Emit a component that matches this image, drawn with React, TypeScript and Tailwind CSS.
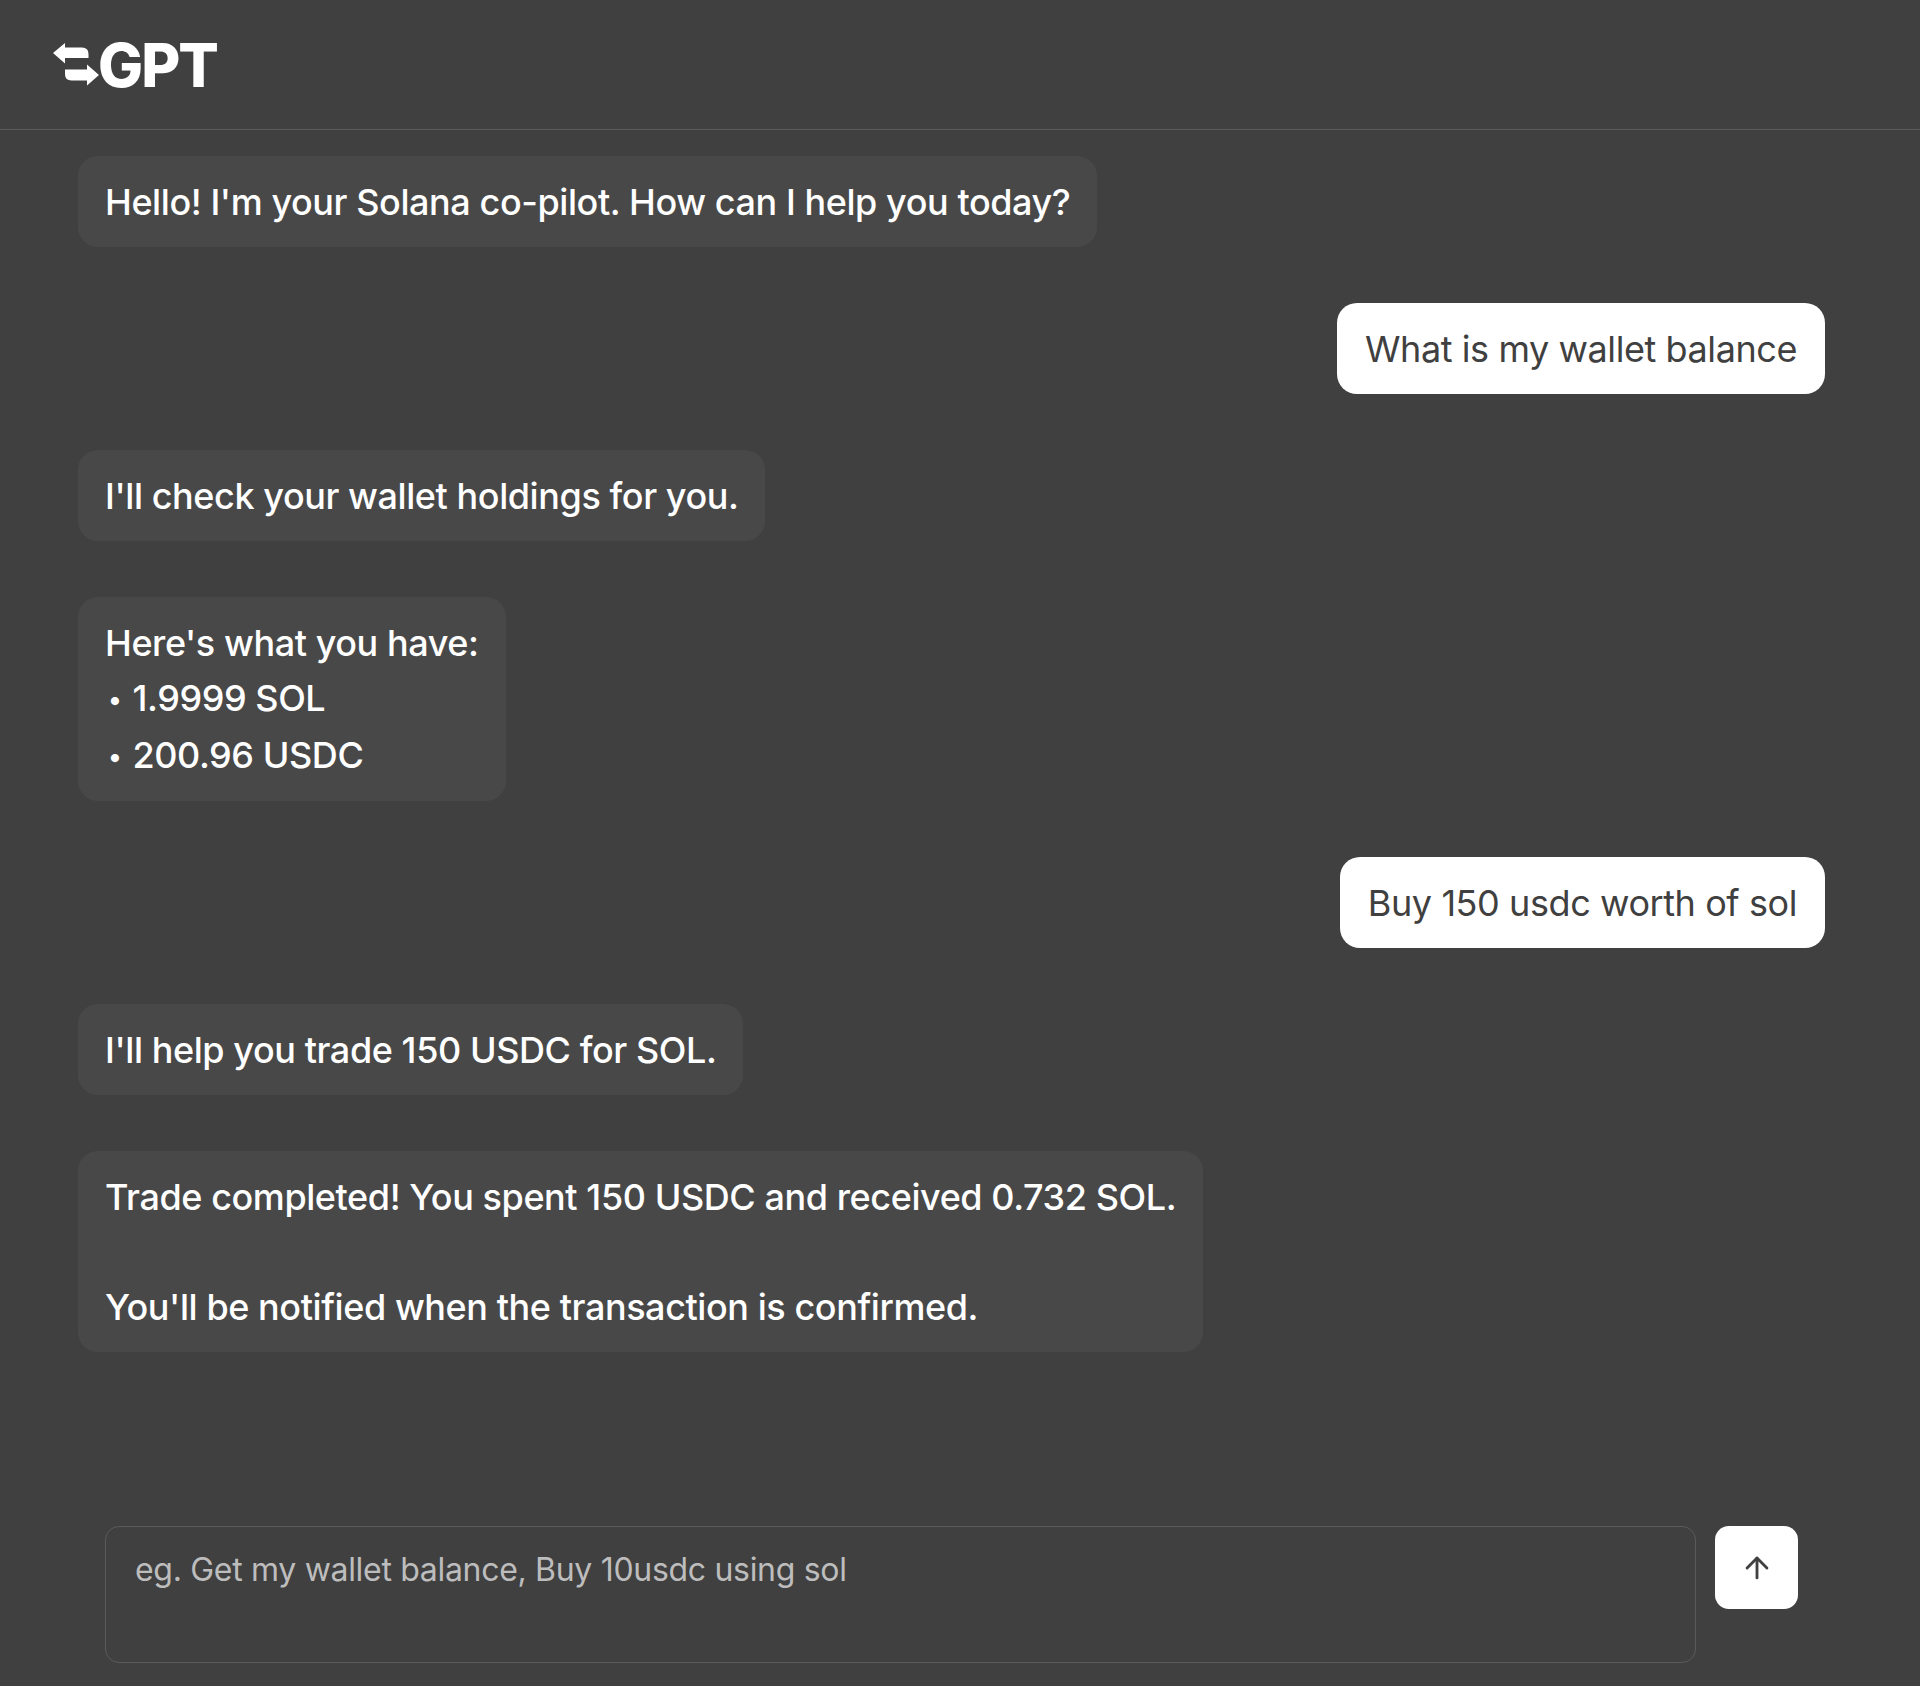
import React from 'react';
import { ArrowUp } from 'lucide-react';

const Logo = () => (
  <div className="flex items-center">
    <svg width="46" height="44" viewBox="0 0 46 44" fill="white" className="mr-[-1px]">
      <path d="M0 10 L12 0 V4.5 H29 Q35.5 4.5 35.5 11 V15 H12 V20.5 Z" />
      <path d="M46 32 L34 21.5 V26.5 H12 V31 Q12 37.5 18.5 37.5 H34 V42.5 Z" />
    </svg>
    <span className="text-[60px] leading-none font-extrabold tracking-[-2px] text-white">GPT</span>
  </div>
);

const Bot = ({ children }: { children: React.ReactNode }) => (
  <div className="self-start rounded-[20px] bg-[#484848] px-[27px] pb-[17px] pt-[19px] font-[450] text-white whitespace-pre-line">
    {children}
  </div>
);

const User = ({ children }: { children: React.ReactNode }) => (
  <div className="self-end rounded-[20px] bg-white px-[28px] pb-[17px] pt-[19px] text-[#404040]">
    {children}
  </div>
);

const Bullet = () => <span className="mr-[11px] ml-[3px] align-[2px] text-[26px]">•</span>;

export default function App() {
  return (
    <div className="flex h-[1686px] flex-col bg-[#404040] font-['Inter',sans-serif]">
      <header className="flex h-[130px] shrink-0 items-center border-b border-[#5a5a5a] pl-[53px]">
        <Logo />
      </header>

      <div className="flex flex-col gap-[55.7px] pl-[78px] pr-[95px] pt-[26px] text-[36px] leading-[55.3px] tracking-[-0.42px]">
        <Bot>Hello! I'm your Solana co-pilot. How can I help you today?</Bot>
        <User>What is my wallet balance</User>
        <Bot>I'll check your wallet holdings for you.</Bot>
        <Bot>
          <div>Here's what you have:</div>
          <div><Bullet />1.9999 SOL</div>
          <div><Bullet />200.96 USDC</div>
        </Bot>
        <User>Buy 150 usdc worth of sol</User>
        <Bot>I'll help you trade 150 USDC for SOL.</Bot>
        <Bot>{"Trade completed! You spent 150 USDC and received 0.732 SOL.\n\nYou'll be notified when the transaction is confirmed."}</Bot>
      </div>

      <div className="mt-auto flex items-start gap-[19px] pb-[23px] pl-[105px] pr-[122px]">
        <textarea
          readOnly
          placeholder="eg. Get my wallet balance, Buy 10usdc using sol"
          className="h-[137px] flex-1 resize-none rounded-[14px] border border-[#5a5a5a] bg-transparent px-[29px] pb-[21px] pt-[23px] text-[32px] leading-[40px] tracking-[-0.31px] text-white outline-none placeholder:text-[#bdbdbd]"
        />
        <button className="flex h-[83px] w-[83px] shrink-0 items-center justify-center rounded-[14px] bg-white text-[#404040]">
          <ArrowUp size={34} strokeWidth={2} />
        </button>
      </div>
    </div>
  );
}
